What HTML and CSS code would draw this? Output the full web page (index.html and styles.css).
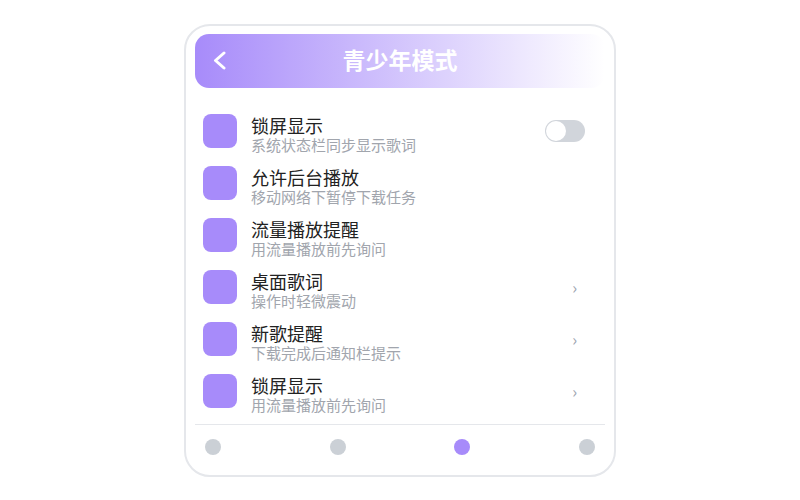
FILE: index.html
```html
<!doctype html>
<html lang="zh-CN">
<head>
    <meta charset="UTF-8">
    <meta name="viewport" content="width=device-width, initial-scale=1">
    <title>青少年模式</title>
    <link rel="stylesheet" href="styles.css">
</head>
<body>
<div class="phone">
    <header class="topbar">
        <span class="back">
            <svg width="13" height="19" viewBox="0 0 13 19">
                <polyline points="11,2 2.5,9.5 11,17" fill="none" stroke="#fff" stroke-width="3" stroke-linecap="round" stroke-linejoin="round"/>
            </svg>
        </span>
        <h1>青少年模式</h1>
        <span></span>
    </header>

    <ul class="settings">
        <li>
            <div class="icon"></div>
            <div class="text">
                <p class="title">锁屏显示</p>
                <p class="sub">系统状态栏同步显示歌词</p>
            </div>
            <span class="switch"><span class="knob"></span></span>
        </li>
        <li>
            <div class="icon"></div>
            <div class="text">
                <p class="title">允许后台播放</p>
                <p class="sub">移动网络下暂停下载任务</p>
            </div>
        </li>
        <li>
            <div class="icon"></div>
            <div class="text">
                <p class="title">流量播放提醒</p>
                <p class="sub">用流量播放前先询问</p>
            </div>
        </li>
        <li>
            <div class="icon"></div>
            <div class="text">
                <p class="title">桌面歌词</p>
                <p class="sub">操作时轻微震动</p>
            </div>
            <span class="arrow">›</span>
        </li>
        <li>
            <div class="icon"></div>
            <div class="text">
                <p class="title">新歌提醒</p>
                <p class="sub">下载完成后通知栏提示</p>
            </div>
            <span class="arrow">›</span>
        </li>
        <li>
            <div class="icon"></div>
            <div class="text">
                <p class="title">锁屏显示</p>
                <p class="sub">用流量播放前先询问</p>
            </div>
            <span class="arrow">›</span>
        </li>
    </ul>

    <nav class="tabs">
        <span class="dot"></span>
        <span class="dot"></span>
        <span class="dot active"></span>
        <span class="dot"></span>
    </nav>
</div>
</body>
</html>
```

FILE: styles.css
```css
body {
    margin: 0;
    font-family: "Noto Sans CJK SC", "Noto Sans", sans-serif;
    background: #fff;
    display: flex;
    justify-content: center;
    align-items: center;
    height: 500px;
}
.phone {
    box-sizing: border-box;
    width: 432px;
    height: 453px;
    padding: 8px 9px 9px;
    border: 2px solid #e5e7eb;
    border-radius: 26px;
    background: #fff;
    display: flex;
    flex-direction: column;
}
.topbar {
    height: 54px;
    flex-shrink: 0;
    border-radius: 14px;
    background: linear-gradient(90deg, #a78bfa, rgba(167, 139, 250, 0));
    display: grid;
    grid-template-columns: 30px 1fr 30px;
    align-items: center;
    padding: 0 18px;
}
.back {
    display: flex;
    align-items: center;
}
.topbar h1 {
    margin: 0 0 3px;
    line-height: 1;
    text-align: center;
    color: #fff;
    font-size: 23px;
    font-weight: 700;
}
.settings {
    list-style: none;
    margin: 17px 0 0;
    padding: 0 8px;
}
.settings li {
    display: flex;
    align-items: center;
    height: 52px;
}
.icon {
    width: 34px;
    height: 34px;
    border-radius: 8px;
    background: #a78bfa;
    flex-shrink: 0;
}
.text {
    flex: 1;
    margin-left: 14px;
    padding-top: 8px;
}
.text p {
    margin: 0;
}
.title {
    font-size: 18px;
    line-height: 21px;
    color: #222;
}
.sub {
    font-size: 15px;
    line-height: 18px;
    color: #a1a5ad;
}
.switch {
    width: 40px;
    height: 22px;
    border-radius: 11px;
    background: #d1d5db;
    margin-right: 12px;
    display: flex;
    align-items: center;
    padding: 0 1px;
    box-sizing: border-box;
}
.knob {
    width: 20px;
    height: 20px;
    border-radius: 50%;
    background: #fff;
}
.arrow {
    color: #9ca3af;
    font-size: 16px;
    margin-right: 20px;
}
.tabs {
    margin-top: auto;
    border-top: 1px solid #e5e7eb;
    padding: 14px 10px 11px;
    display: flex;
    justify-content: space-between;
}
.dot {
    width: 16px;
    height: 16px;
    border-radius: 50%;
    background: #cbd0d6;
}
.dot.active {
    background: #a78bfa;
}
```
